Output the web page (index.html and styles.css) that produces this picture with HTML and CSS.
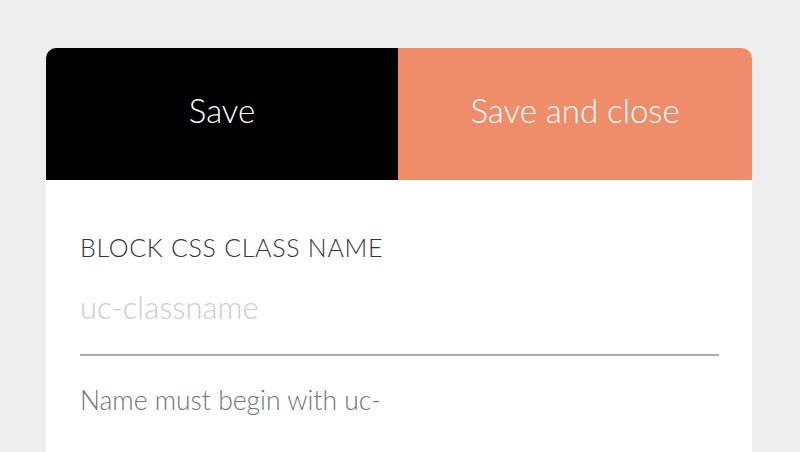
FILE: index.html
```html
<!DOCTYPE html>
<html>
<head>
<meta charset="utf-8">
<link rel="stylesheet" href="styles.css">
</head>
<body>
<div class="card">
  <div class="actions">
    <button class="btn btn-save">Save</button>
    <button class="btn btn-close">Save and close</button>
  </div>
  <div class="content">
    <label class="field-label" for="cls">BLOCK CSS CLASS NAME</label>
    <input id="cls" class="field-input" type="text" placeholder="uc-classname">
    <p class="field-help">Name must begin with uc-</p>
  </div>
</div>
</body>
</html>
```
FILE: styles.css
```css
html, body {
  margin: 0;
  height: 100%;
}
body {
  background: #eeeeee;
  padding: 48px 48px 0 46px;
  box-sizing: border-box;
  overflow: hidden;
  font-family: "Lato", "Liberation Sans", sans-serif;
}
.card {
  background: #ffffff;
  border-radius: 10px 10px 0 0;
  overflow: hidden;
  min-height: 420px;
}
.actions {
  display: grid;
  grid-template-columns: 352px 1fr;
  height: 132px;
}
.btn {
  border: 0;
  margin: 0;
  font-family: inherit;
  font-weight: 300;
  font-size: 33px;
  color: #ffffff;
  padding: 0 0 8px;
}
.btn-save {
  background: #000000;
}
.btn-close {
  background: #ef8c6a;
}
.content {
  padding: 52px 33px 0 34px;
  display: flex;
  flex-direction: column;
}
.field-label {
  font-size: 25px;
  font-weight: 300;
  color: #333333;
  letter-spacing: 0.7px;
  line-height: 30px;
}
.field-input {
  box-sizing: border-box;
  height: 94px;
  border: 0;
  border-bottom: 2px solid #aaaaaa;
  outline: none;
  padding: 29px 0 31px;
  margin: 0;
  font-family: inherit;
  font-size: 31px;
  font-weight: 300;
  line-height: 32px;
  color: #333;
}
.field-input::placeholder {
  color: #cccccc;
}
.field-help {
  margin: 28px 0 0;
  font-size: 26.5px;
  font-weight: 300;
  color: #737373;
  line-height: 32px;
}
```
